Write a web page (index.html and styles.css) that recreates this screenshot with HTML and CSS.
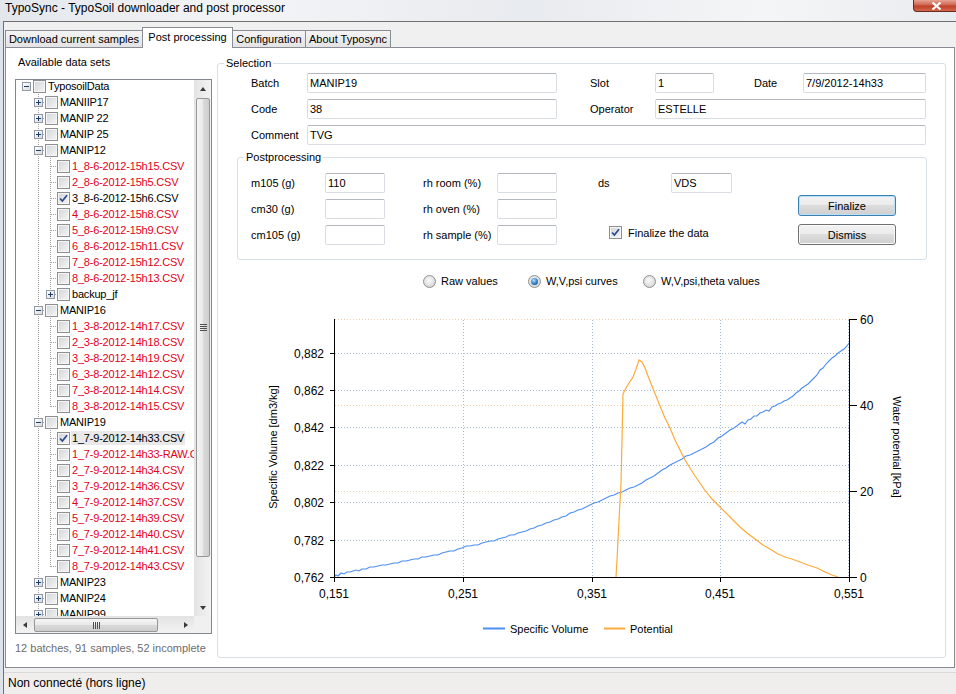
FILE: index.html
```html
<!DOCTYPE html>
<html lang="en">
<head>
    <meta charset="UTF-8">
    <title>TypoSync - TypoSoil downloader and post processor</title>
    <link rel="stylesheet" href="styles.css">
</head>
<body>
    <div class="titlebar">
        <span class="title">TypoSync - TypoSoil downloader and post processor</span>
        <span class="close-btn">
            <svg width="11" height="8" viewBox="0 0 11 8"><path d="M1.5 0.5 9.5 7.5M9.5 0.5 1.5 7.5" stroke="#fff" stroke-width="2.2" fill="none"/></svg>
        </span>
    </div>

    <div class="frame">
        <div class="client">
            <div class="tabs">
                <div class="tab tab-download">Download current samples</div>
                <div class="tab tab-post active">Post processing</div>
                <div class="tab tab-config">Configuration</div>
                <div class="tab tab-about">About Typosync</div>
            </div>

            <div class="tab-page">
                <!-- data sets tree -->
                <div class="datasets">
                    <div class="panel-label">Available data sets</div>
                    <div class="tree-box">
                        <div class="tree-view">
                            <div class="tree-rows">
                                <div class="tree-inner">
                                    <div class="row"><span class="g"><span class="exp minus"></span></span><span class="cb"></span><span class="txt">TyposoilData</span></div>
                                    <div class="row"><span class="g"></span><span class="g t"><span class="exp plus"></span></span><span class="cb"></span><span class="txt">MANIIP17</span></div>
                                    <div class="row"><span class="g"></span><span class="g t"><span class="exp plus"></span></span><span class="cb"></span><span class="txt">MANIP 22</span></div>
                                    <div class="row"><span class="g"></span><span class="g t"><span class="exp plus"></span></span><span class="cb"></span><span class="txt">MANIP 25</span></div>
                                    <div class="row"><span class="g"></span><span class="g t"><span class="exp minus"></span></span><span class="cb"></span><span class="txt">MANIP12</span></div>
                                    <div class="row"><span class="g"></span><span class="g v"></span><span class="g t"></span><span class="cb"></span><span class="txt bad">1_8-6-2012-15h15.CSV</span></div>
                                    <div class="row"><span class="g"></span><span class="g v"></span><span class="g t"></span><span class="cb"></span><span class="txt bad">2_8-6-2012-15h5.CSV</span></div>
                                    <div class="row"><span class="g"></span><span class="g v"></span><span class="g t"></span><span class="cb"><svg class="tick" width="9" height="9" viewBox="0 0 9 9"><path d="M1 4.5 3.4 7 8 1.2"/></svg></span><span class="txt">3_8-6-2012-15h6.CSV</span></div>
                                    <div class="row"><span class="g"></span><span class="g v"></span><span class="g t"></span><span class="cb"></span><span class="txt bad">4_8-6-2012-15h8.CSV</span></div>
                                    <div class="row"><span class="g"></span><span class="g v"></span><span class="g t"></span><span class="cb"></span><span class="txt bad">5_8-6-2012-15h9.CSV</span></div>
                                    <div class="row"><span class="g"></span><span class="g v"></span><span class="g t"></span><span class="cb"></span><span class="txt bad">6_8-6-2012-15h11.CSV</span></div>
                                    <div class="row"><span class="g"></span><span class="g v"></span><span class="g t"></span><span class="cb"></span><span class="txt bad">7_8-6-2012-15h12.CSV</span></div>
                                    <div class="row"><span class="g"></span><span class="g v"></span><span class="g t"></span><span class="cb"></span><span class="txt bad">8_8-6-2012-15h13.CSV</span></div>
                                    <div class="row"><span class="g"></span><span class="g v"></span><span class="g l"><span class="exp plus"></span></span><span class="cb"></span><span class="txt">backup_jf</span></div>
                                    <div class="row"><span class="g"></span><span class="g t"><span class="exp minus"></span></span><span class="cb"></span><span class="txt">MANIP16</span></div>
                                    <div class="row"><span class="g"></span><span class="g v"></span><span class="g t"></span><span class="cb"></span><span class="txt bad">1_3-8-2012-14h17.CSV</span></div>
                                    <div class="row"><span class="g"></span><span class="g v"></span><span class="g t"></span><span class="cb"></span><span class="txt bad">2_3-8-2012-14h18.CSV</span></div>
                                    <div class="row"><span class="g"></span><span class="g v"></span><span class="g t"></span><span class="cb"></span><span class="txt bad">3_3-8-2012-14h19.CSV</span></div>
                                    <div class="row"><span class="g"></span><span class="g v"></span><span class="g t"></span><span class="cb"></span><span class="txt bad">6_3-8-2012-14h12.CSV</span></div>
                                    <div class="row"><span class="g"></span><span class="g v"></span><span class="g t"></span><span class="cb"></span><span class="txt bad">7_3-8-2012-14h14.CSV</span></div>
                                    <div class="row"><span class="g"></span><span class="g v"></span><span class="g l"></span><span class="cb"></span><span class="txt bad">8_3-8-2012-14h15.CSV</span></div>
                                    <div class="row"><span class="g"></span><span class="g t"><span class="exp minus"></span></span><span class="cb"></span><span class="txt">MANIP19</span></div>
                                    <div class="row"><span class="g"></span><span class="g v"></span><span class="g t"></span><span class="cb"><svg class="tick" width="9" height="9" viewBox="0 0 9 9"><path d="M1 4.5 3.4 7 8 1.2"/></svg></span><span class="txt sel">1_7-9-2012-14h33.CSV</span></div>
                                    <div class="row"><span class="g"></span><span class="g v"></span><span class="g t"></span><span class="cb"></span><span class="txt bad">1_7-9-2012-14h33-RAW.CSV</span></div>
                                    <div class="row"><span class="g"></span><span class="g v"></span><span class="g t"></span><span class="cb"></span><span class="txt bad">2_7-9-2012-14h34.CSV</span></div>
                                    <div class="row"><span class="g"></span><span class="g v"></span><span class="g t"></span><span class="cb"></span><span class="txt bad">3_7-9-2012-14h36.CSV</span></div>
                                    <div class="row"><span class="g"></span><span class="g v"></span><span class="g t"></span><span class="cb"></span><span class="txt bad">4_7-9-2012-14h37.CSV</span></div>
                                    <div class="row"><span class="g"></span><span class="g v"></span><span class="g t"></span><span class="cb"></span><span class="txt bad">5_7-9-2012-14h39.CSV</span></div>
                                    <div class="row"><span class="g"></span><span class="g v"></span><span class="g t"></span><span class="cb"></span><span class="txt bad">6_7-9-2012-14h40.CSV</span></div>
                                    <div class="row"><span class="g"></span><span class="g v"></span><span class="g t"></span><span class="cb"></span><span class="txt bad">7_7-9-2012-14h41.CSV</span></div>
                                    <div class="row"><span class="g"></span><span class="g v"></span><span class="g l"></span><span class="cb"></span><span class="txt bad">8_7-9-2012-14h43.CSV</span></div>
                                    <div class="row"><span class="g"></span><span class="g t"><span class="exp plus"></span></span><span class="cb"></span><span class="txt">MANIP23</span></div>
                                    <div class="row"><span class="g"></span><span class="g t"><span class="exp plus"></span></span><span class="cb"></span><span class="txt">MANIP24</span></div>
                                    <div class="row"><span class="g"></span><span class="g t"><span class="exp plus"></span></span><span class="cb"></span><span class="txt">MANIP99</span></div>
                                </div>
                            </div>
                            <div class="vscroll">
                                <span class="sb-btn"><span class="arrow-up"></span></span>
                                <span class="vthumb"><span class="grip-v"></span></span>
                                <span class="vtrack"></span>
                                <span class="sb-btn"><span class="arrow-down"></span></span>
                            </div>
                        </div>
                        <div class="hscroll">
                            <div class="hbar">
                                <span class="sb-btn"><span class="arrow-left"></span></span>
                                <span class="hthumb"><span class="grip-h"></span></span>
                                <span class="htrack"></span>
                                <span class="sb-btn"><span class="arrow-right"></span></span>
                            </div>
                            <span class="corner"></span>
                        </div>
                    </div>
                    <div class="summary">12 batches, 91 samples, 52 incomplete</div>
                </div>

                <!-- selection -->
                <fieldset class="group selection">
                    <legend>Selection</legend>
                    <div class="selection-body">
                        <div class="sel-grid">
                            <span>Batch</span>
                            <input class="textbox" type="text" value="MANIP19">
                            <span class="at4">Slot</span>
                            <input class="textbox" type="text" value="1">
                            <span class="at7">Date</span>
                            <input class="textbox" type="text" value="7/9/2012-14h33">

                            <span class="at1">Code</span>
                            <input class="textbox" type="text" value="38">
                            <span class="at4">Operator</span>
                            <input class="textbox to-end" type="text" value="ESTELLE">

                            <span class="at1">Comment</span>
                            <input class="textbox wide" type="text" value="TVG">
                        </div>

                        <fieldset class="group post">
                            <legend>Postprocessing</legend>
                            <div class="post-body">
                                <div class="post-grid">
                                    <span class="at1">m105 (g)</span>
                                    <input class="textbox" type="text" value="110">
                                    <span class="at4">rh room (%)</span>
                                    <input class="textbox" type="text" value="">
                                    <span class="at7">ds</span>
                                    <input class="textbox" type="text" value="VDS">

                                    <span class="at1">cm30 (g)</span>
                                    <input class="textbox" type="text" value="">
                                    <span class="at4">rh oven (%)</span>
                                    <input class="textbox" type="text" value="">

                                    <span class="at1">cm105 (g)</span>
                                    <input class="textbox" type="text" value="">
                                    <span class="at4">rh sample (%)</span>
                                    <input class="textbox" type="text" value="">
                                    <span class="finalize-check">
                                        <span class="cb form-cb"><svg class="tick" width="9" height="9" viewBox="0 0 9 9"><path d="M1 4.5 3.4 7 8 1.2"/></svg></span>
                                        <span>Finalize the data</span>
                                    </span>
                                </div>
                                <div class="post-buttons">
                                    <button class="btn default">Finalize</button>
                                    <button class="btn">Dismiss</button>
                                </div>
                            </div>
                        </fieldset>

                        <div class="view-options">
                            <span class="radio-item w105"><span class="radio"></span>Raw values</span>
                            <span class="radio-item w115"><span class="radio"><span class="dot"></span></span>W,V,psi curves</span>
                            <span class="radio-item"><span class="radio"></span>W,V,psi,theta values</span>
                        </div>

                        <svg class="chart" width="690" height="355" viewBox="237 295 690 355">
                            <path class="grid-orange" d="M335 319.5H849M335 405.5H849M335 491.5H849"/>
                            <path class="grid-blue" d="M335 353.5H849M335 390.5H849M335 427.5H849M335 465.5H849M335 502.5H849M335 540.5H849M463.5 320V577M592.5 320V577M720.5 320V577M848.5 320V577"/>

                            <polyline class="curve-volume" points="334,577 336,575 338,576 341,573 344,574 347,572 350,572 353,571 356,570 359,571 362,569 366,569 370,567 374,567 378,566 382,565 386,565 390,564 394,563 398,563 402,561 406,561 410,560 414,559 418,559 422,557 426,557 430,556 434,555 438,555 442,553 446,552 450,551 454,551 458,549 462,548 466,546 470,546 474,545 478,545 482,543 486,542 490,541 494,541 498,539 502,538 506,537 510,535 514,535 518,533 522,532 526,531 530,529 534,528 538,526 542,525 546,523 550,522 554,520 558,519 562,517 566,516 570,513 574,512 578,510 582,509 586,507 590,505 594,503 598,502 602,500 606,498 610,496 614,495 618,493 622,492 626,490 630,488 634,487 638,485 642,483 646,480 650,478 654,476 658,473 662,470 666,468 670,465 674,463 678,461 682,459 686,456 690,455 694,453 698,451 702,449 706,447 710,444 714,442 718,438 722,436 726,433 730,430 734,428 738,425 742,422 745,424 748,420 751,419 754,416 757,416 760,413 763,412 766,410 769,411 772,407 775,406 778,404 781,403 784,401 787,400 790,398 793,396 796,393 799,391 802,388 805,386 808,384 811,381 814,378 817,375 820,370 823,368 826,364 829,361 832,358 835,356 838,353 841,351 844,349 847,346 849,343"/>
                            <polyline class="curve-potential" points="616,577 617,560 619,520 621,484 622,440 623,394 626,388 629,383 633,377 636,369 639,360 642,362 645,368 648,376 652,386 656,396 660,406 665,418 670,428 675,440 680,450 685,460 690,468 695,476 700,483 704,489 708,494 712,499 716,503 720,507 726,513 733,520 740,527 747,533 755,539 763,545 770,549 778,554 785,557 792,559 800,562 808,565 817,568 825,572 832,575 838,577"/>

                            <path class="axis" d="M334.5 319V578M334 577.5H850M849.5 319V578M849 319.5H857M849 405.5H857M849 491.5H857M849 577.5H857M330 353.5H334M330 390.5H334M330 427.5H334M330 465.5H334M330 502.5H334M330 540.5H334M330 577.5H334M334.5 578V582M463.5 578V582M592.5 578V582M720.5 578V582M849.5 578V582"/>

                            <g class="axis-labels">
                                <text x="324" y="358" text-anchor="end">0,882</text>
                                <text x="324" y="395" text-anchor="end">0,862</text>
                                <text x="324" y="432" text-anchor="end">0,842</text>
                                <text x="324" y="470" text-anchor="end">0,822</text>
                                <text x="324" y="507" text-anchor="end">0,802</text>
                                <text x="324" y="545" text-anchor="end">0,782</text>
                                <text x="324" y="582" text-anchor="end">0,762</text>

                                <text x="860" y="324">60</text>
                                <text x="860" y="410">40</text>
                                <text x="860" y="496">20</text>
                                <text x="860" y="582">0</text>

                                <text x="334" y="598" text-anchor="middle">0,151</text>
                                <text x="463" y="598" text-anchor="middle">0,251</text>
                                <text x="592" y="598" text-anchor="middle">0,351</text>
                                <text x="720" y="598" text-anchor="middle">0,451</text>
                                <text x="849" y="598" text-anchor="middle">0,551</text>
                            </g>

                            <text class="axis-title" transform="translate(277 447) rotate(-90)" text-anchor="middle">Specific Volume [dm3/kg]</text>
                            <text class="axis-title" transform="translate(893 447) rotate(90)" text-anchor="middle">Water potential [kPa]</text>

                            <path class="legend-volume" d="M483 628.5H505"/>
                            <text class="legend-text" x="510" y="632.5">Specific Volume</text>
                            <path class="legend-potential" d="M604 628.5H625"/>
                            <text class="legend-text" x="630" y="632.5">Potential</text>
                        </svg>
                    </div>
                </fieldset>
            </div>

            <div class="statusbar">Non connecté (hors ligne)</div>
        </div>
    </div>
</body>
</html>
```

FILE: styles.css
```css
* {
    box-sizing: border-box;
}

body {
    margin: 0;
    width: 956px;
    height: 694px;
    overflow: hidden;
    background: #dde3ea;
    font-family: 'Liberation Sans', Arial, sans-serif;
    font-size: 11px;
    color: #000;
}

/* window chrome */
.titlebar {
    height: 21px;
    display: flex;
    align-items: flex-start;
    padding-left: 5px;
    background: linear-gradient(to right, #e3e7ec, #f3f4f6 25%, #e8ebef 55%, #f4f5f6 80%, #e9ecef);
}

.title {
    font-size: 12px;
    line-height: 16px;
}

.close-btn {
    margin-left: auto;
    margin-right: -4px;
    width: 47px;
    height: 12px;
    border: 1px solid #6a2a20;
    border-top: none;
    border-radius: 0 0 4px 4px;
    background: linear-gradient(#e8a394, #d06650 45%, #c0402a 55%, #d3674b);
    display: flex;
    align-items: center;
    justify-content: center;
}

.frame {
    display: flex;
    height: 673px;
    padding-left: 3px;
}

.client {
    flex: 1;
    border-top: 1px solid #707070;
    border-left: 1px solid #707070;
    background: #f0f0f0;
}

/* tabs */
.tabs {
    position: relative;
    z-index: 1;
    display: flex;
    align-items: flex-end;
    height: 20px;
    margin: 5px 0 0 1px;
}

.tab {
    height: 17px;
    line-height: 16px;
    text-align: center;
    border: 1px solid #898c95;
    border-bottom: none;
    margin-right: -1px;
    background: linear-gradient(#f4f4f4, #e3e3e3);
}

.tab.active {
    position: relative;
    z-index: 1;
    height: 21px;
    line-height: 19px;
    margin-bottom: -1px;
    background: #fff;
}

.tab-download { width: 138px; }
.tab-post { width: 91px; }
.tab-config { width: 74px; }
.tab-about { width: 86px; }

.tab-page {
    display: flex;
    width: 950px;
    height: 621px;
    margin-left: 1px;
    padding: 7px 0 0 9px;
    border: 1px solid #898c95;
    background: #fff;
}

/* data sets */
.datasets {
    width: 197px;
    flex: none;
    display: flex;
    flex-direction: column;
}

.panel-label {
    line-height: 14px;
    padding-left: 3px;
}

.tree-box {
    margin-top: 10px;
    height: 555px;
    border: 1px solid #828790;
    display: flex;
    flex-direction: column;
}

.tree-view {
    flex: 1;
    min-height: 0;
    display: flex;
}

.tree-rows {
    flex: 1;
    overflow: hidden;
    padding-left: 4px;
}

.tree-inner {
    margin-top: -2px;
}

.row {
    height: 16px;
    display: flex;
    align-items: center;
    white-space: nowrap;
}

.g {
    width: 12px;
    height: 16px;
    flex: none;
    display: flex;
    align-items: center;
    padding-left: 2px;
}

.g.v {
    background: repeating-linear-gradient(#a0a0a0 0 1px, transparent 1px 2px) 6px 0 / 1px 16px no-repeat;
}

.g.t {
    background:
        repeating-linear-gradient(to right, #a0a0a0 0 1px, transparent 1px 2px) 7px 8px / 5px 1px no-repeat,
        repeating-linear-gradient(#a0a0a0 0 1px, transparent 1px 2px) 6px 0 / 1px 16px no-repeat;
}

.g.l {
    background:
        repeating-linear-gradient(to right, #a0a0a0 0 1px, transparent 1px 2px) 7px 8px / 5px 1px no-repeat,
        repeating-linear-gradient(#a0a0a0 0 1px, transparent 1px 2px) 6px 0 / 1px 9px no-repeat;
}

.exp {
    width: 9px;
    height: 9px;
    border: 1px solid #929aa5;
    background: linear-gradient(135deg, #fff, #dadada);
}

.exp.plus {
    background:
        linear-gradient(#1d3a66, #1d3a66) center / 5px 1px no-repeat,
        linear-gradient(#1d3a66, #1d3a66) center / 1px 5px no-repeat,
        linear-gradient(135deg, #fff, #dadada);
}

.exp.minus {
    background:
        linear-gradient(#1d3a66, #1d3a66) center / 5px 1px no-repeat,
        linear-gradient(135deg, #fff, #dadada);
}

.cb {
    width: 13px;
    height: 13px;
    flex: none;
    margin-left: 1px;
    border: 1px solid #8e8f8f;
    box-shadow: inset 0 0 0 1px #f6f6f6;
    background: linear-gradient(135deg, #d2d4d8, #f6f6f6);
    display: flex;
    align-items: center;
    justify-content: center;
}

.tick path {
    fill: none;
    stroke: #2b4a8c;
    stroke-width: 1.7;
}

.txt {
    margin-left: 1px;
    padding: 0 1px;
    line-height: 14px;
    letter-spacing: -0.2px;
}

.txt.bad {
    color: #e2001a;
}

.txt.sel {
    background: #e9e9e9;
}

/* scroll bars */
.vscroll {
    width: 17px;
    flex: none;
    display: flex;
    flex-direction: column;
    background: linear-gradient(to right, #e3e3e3, #f3f3f3);
}

.sb-btn {
    width: 17px;
    height: 17px;
    flex: none;
    display: flex;
    align-items: center;
    justify-content: center;
}

.arrow-up,
.arrow-down {
    border-left: 3.5px solid transparent;
    border-right: 3.5px solid transparent;
}

.arrow-up { border-bottom: 4px solid #3a3a3a; }
.arrow-down { border-top: 4px solid #3a3a3a; }

.arrow-left,
.arrow-right {
    border-top: 3.5px solid transparent;
    border-bottom: 3.5px solid transparent;
}

.arrow-left { border-right: 4px solid #3a3a3a; }
.arrow-right { border-left: 4px solid #3a3a3a; }

.vthumb {
    height: 459px;
    margin: 1px 1px 0 2px;
    border: 1px solid #979797;
    border-radius: 2px;
    background: linear-gradient(to right, #f5f5f5, #e9e9e9 50%, #dadada 50%, #cdcdcd);
    display: flex;
    align-items: center;
    justify-content: center;
}

.grip-v {
    width: 7px;
    height: 7px;
    background: repeating-linear-gradient(#505050 0 1px, transparent 1px 2px);
}

.vtrack,
.htrack {
    flex: 1;
}

.hscroll {
    height: 17px;
    flex: none;
    display: flex;
}

.hbar {
    flex: 1;
    display: flex;
    background: linear-gradient(#e3e3e3, #f3f3f3);
}

.hthumb {
    width: 124px;
    margin: 2px 0 1px 1px;
    border: 1px solid #979797;
    border-radius: 2px;
    background: linear-gradient(#f5f5f5, #e9e9e9 50%, #dadada 50%, #cdcdcd);
    display: flex;
    align-items: center;
    justify-content: center;
}

.grip-h {
    width: 7px;
    height: 7px;
    background: repeating-linear-gradient(to right, #505050 0 1px, transparent 1px 2px);
}

.corner {
    width: 17px;
    background: #f0f0f0;
}

.summary {
    margin-top: 7px;
    line-height: 14px;
    color: #6d6d6d;
}

/* group boxes */
.group {
    min-width: 0;
    margin: 0;
    padding: 0;
    border: 1px solid #d5dfe5;
    border-radius: 3px;
}

.group legend {
    margin-left: 6px;
    padding: 0 2px;
    line-height: 14px;
}

.selection {
    width: 729px;
    height: 602px;
    margin: 1px 0 0 5px;
}

.selection-body {
    padding: 3px 18px 0 19px;
}

.sel-grid {
    display: grid;
    grid-template-columns: 56px 250px 33px 65px 59px 40px 49px 123px;
    grid-auto-rows: 20px;
    row-gap: 6px;
    align-items: center;
    margin-left: 14px;
}

.at1 { grid-column: 1; }
.at4 { grid-column: 4; }
.at7 { grid-column: 7; }
.to-end { grid-column: 5 / 9; }
.wide { grid-column: 2 / 9; }

.textbox {
    width: 100%;
    height: 20px;
    margin: 0;
    padding: 0 2px;
    border: 1px solid #d9dde3;
    border-top-color: #b3b6bc;
    border-radius: 2px;
    background: #fff;
    font-family: 'Liberation Sans', Arial, sans-serif;
    font-size: 11px;
    color: #000;
}

.post {
    width: 690px;
    height: 110px;
    margin-top: 5px;
}

.post-body {
    display: flex;
    padding: 9px 0 0 13px;
}

.post-grid {
    display: grid;
    grid-template-columns: 74px 60px 38px 74px 60px 41px 73px 61px;
    grid-auto-rows: 20px;
    row-gap: 6px;
    align-items: center;
}

.finalize-check {
    grid-column: 7 / 9;
    align-self: start;
    display: flex;
    align-items: center;
    gap: 6px;
    margin: 1px 0 0 11px;
    white-space: nowrap;
}

.form-cb {
    margin-left: 0;
}

.post-buttons {
    display: flex;
    flex-direction: column;
    gap: 8px;
    margin-left: 66px;
    padding-top: 22px;
}

.btn {
    width: 98px;
    height: 21px;
    padding: 0;
    border: 1px solid #707070;
    border-radius: 3px;
    background: linear-gradient(#f2f2f2, #ebebeb 50%, #dddddd 50%, #cfcfcf);
    box-shadow: inset 0 0 0 1px #fbfbfb;
    font-family: 'Liberation Sans', Arial, sans-serif;
    font-size: 11px;
    color: #000;
}

.btn.default {
    border-color: #3c7fb1;
    box-shadow: inset 0 0 0 1px #b9e2fa;
}

/* radio buttons */
.view-options {
    display: flex;
    margin-top: 14px;
    padding-left: 186px;
    line-height: 14px;
}

.radio-item {
    display: flex;
    align-items: center;
    gap: 5px;
    white-space: nowrap;
}

.w105 { width: 105px; }
.w115 { width: 115px; }

.radio {
    width: 13px;
    height: 13px;
    border: 1px solid #8e8f8f;
    border-radius: 50%;
    background: radial-gradient(circle at 45% 40%, #fbfbfb, #d9d9d9 70%, #cfcfcf);
    display: flex;
    align-items: center;
    justify-content: center;
}

.radio .dot {
    width: 7px;
    height: 7px;
    border-radius: 50%;
    background: radial-gradient(circle at 40% 35%, #b6e2fb, #2d7cc4 55%, #0d3a6c);
}

/* chart */
.chart {
    display: block;
    margin-top: 7px;
}

.grid-orange {
    fill: none;
    stroke: #f6cfa6;
    stroke-dasharray: 1 2;
}

.grid-blue {
    fill: none;
    stroke: #a6bad8;
    stroke-dasharray: 1 2;
}

.curve-volume {
    fill: none;
    stroke: #4d8ff2;
    stroke-width: 1.1;
}

.curve-potential {
    fill: none;
    stroke: #fdab3a;
    stroke-width: 1.2;
}

.axis {
    fill: none;
    stroke: #000;
    stroke-width: 1;
}

.axis-labels text {
    font-family: 'Liberation Sans', Arial, sans-serif;
    font-size: 12px;
    fill: #000;
}

.axis-title,
.legend-text {
    font-family: 'Liberation Sans', Arial, sans-serif;
    font-size: 11px;
    fill: #000;
}

.legend-volume {
    stroke: #4d8ff2;
    stroke-width: 2;
}

.legend-potential {
    stroke: #fdab3a;
    stroke-width: 2;
}

/* status bar */
.statusbar {
    height: 22px;
    margin-top: 4px;
    padding-left: 4px;
    border-top: 1px solid #d9d9d9;
    background: #f0eded;
    font-size: 12px;
    line-height: 21px;
}
```
